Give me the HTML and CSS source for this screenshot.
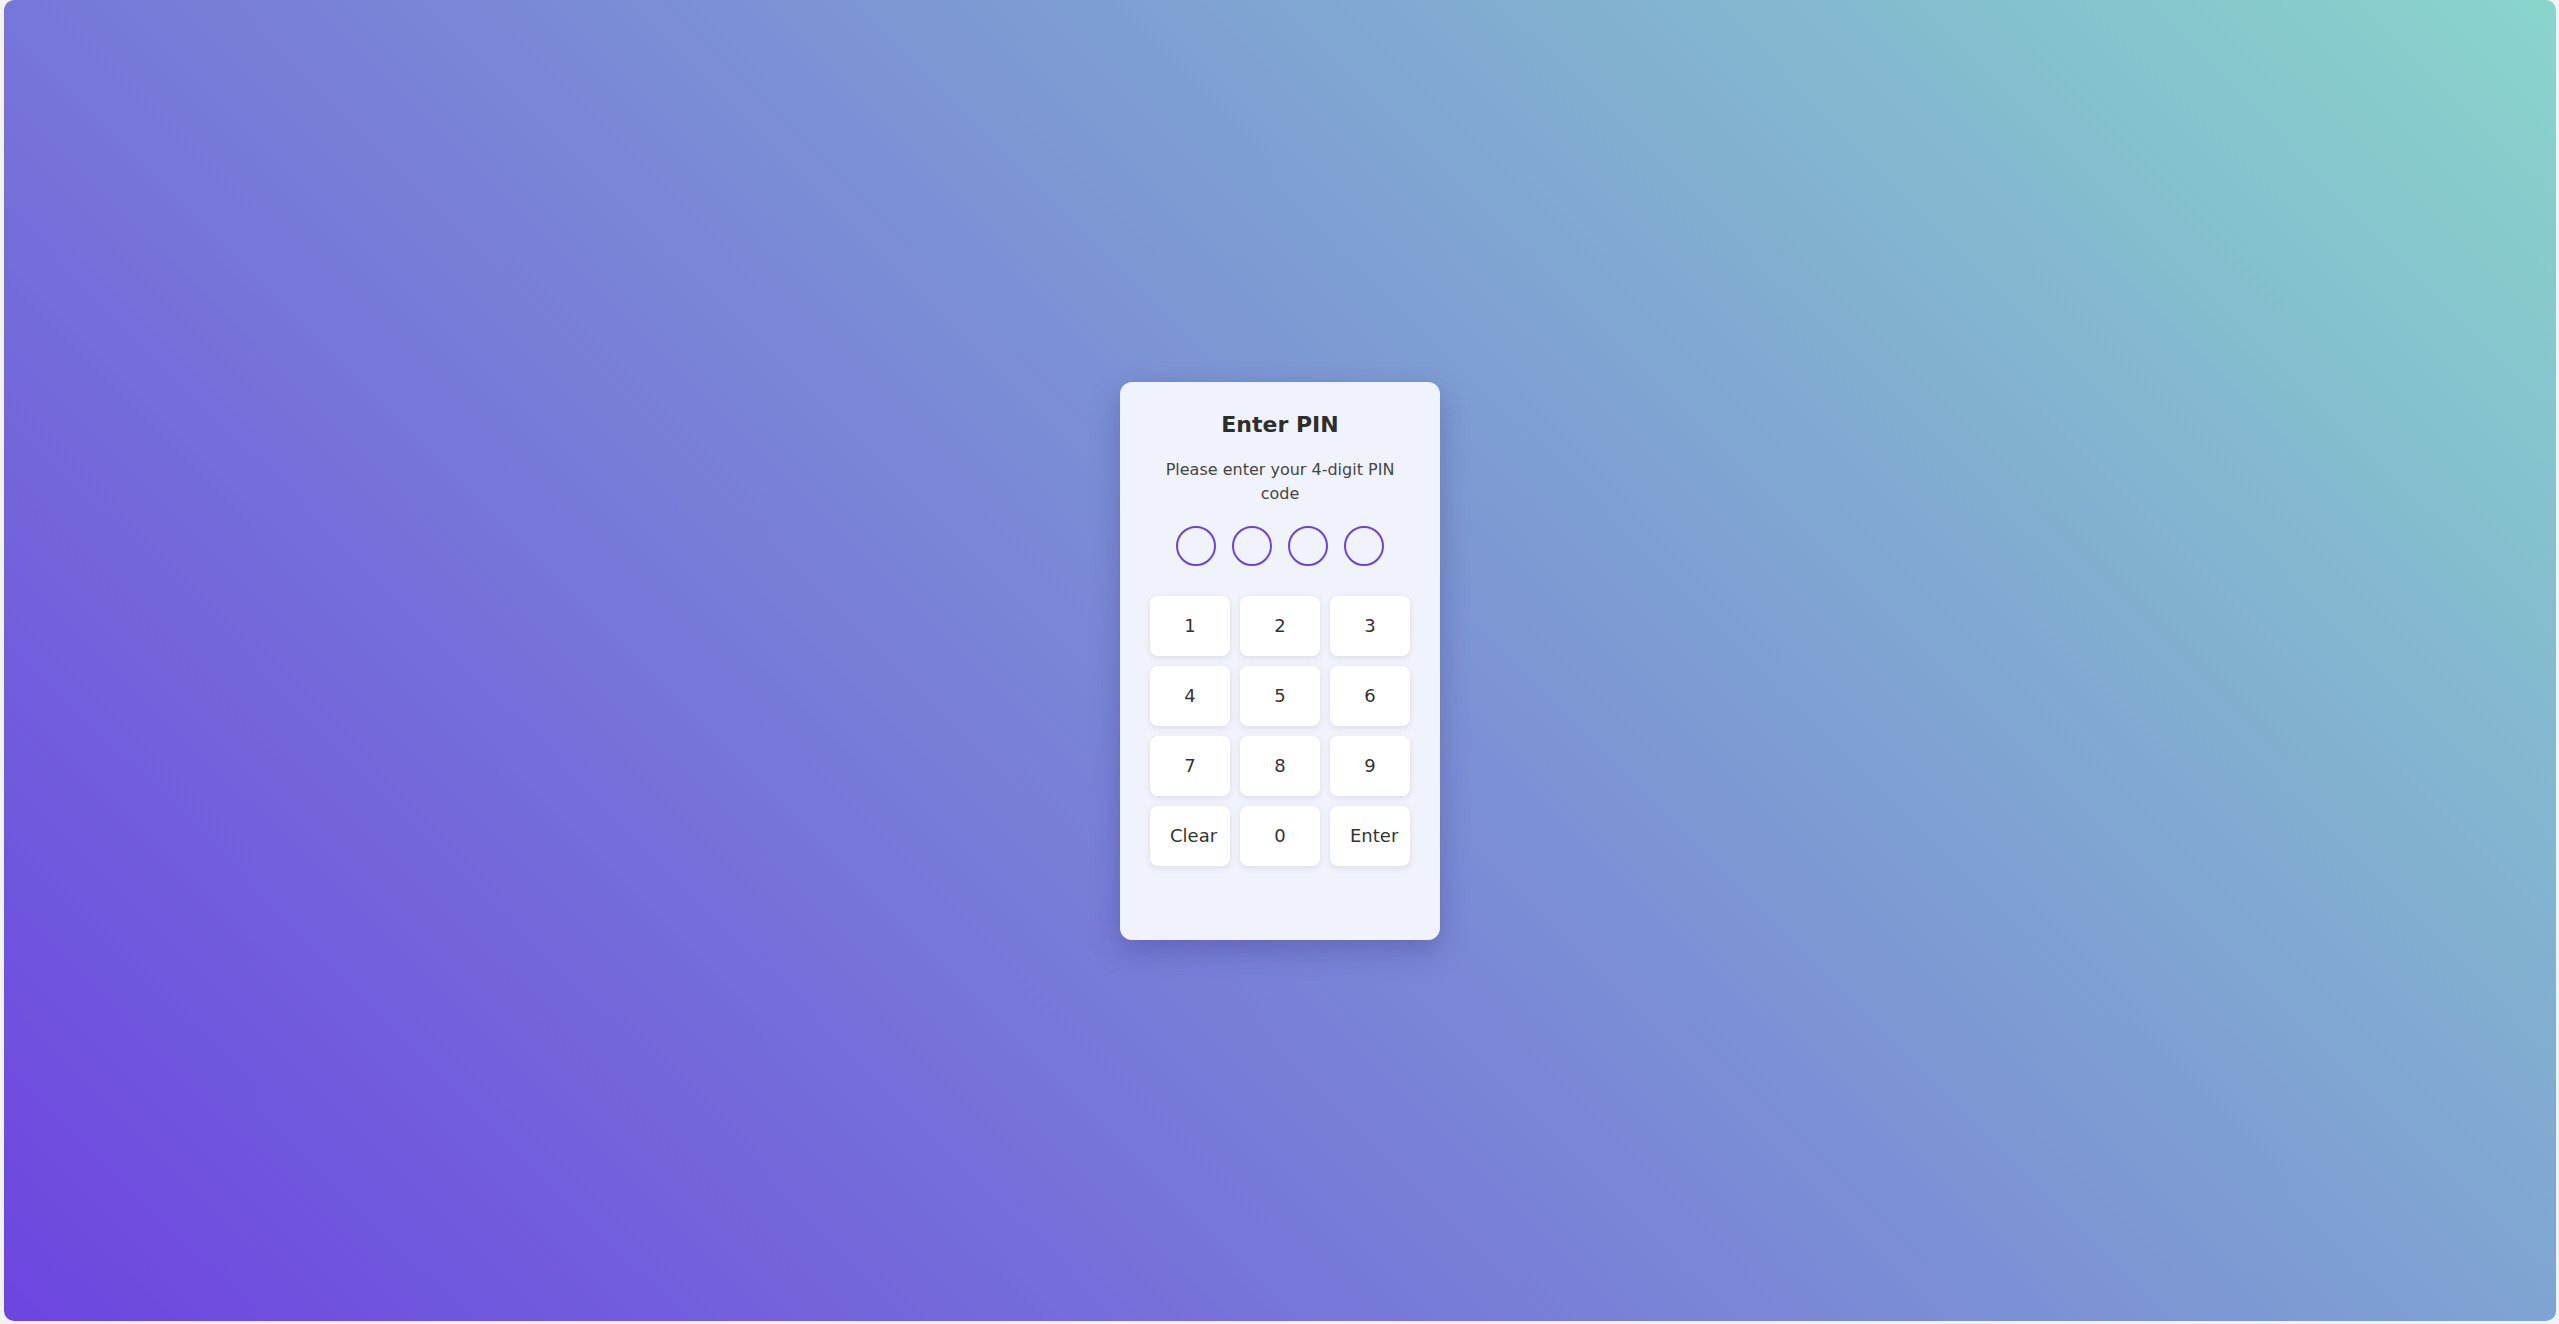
FILE: index.html
```html
<!DOCTYPE html>
<html lang="en">
<head>
<meta charset="utf-8">
<title>Enter PIN</title>
<link rel="stylesheet" href="styles.css">
</head>
<body>
<div class="screen">
  <div class="card">
    <h2 class="title">Enter PIN</h2>
    <p class="subtitle">Please enter your 4-digit PIN code</p>
    <div class="dots">
      <span class="dot"></span>
      <span class="dot"></span>
      <span class="dot"></span>
      <span class="dot"></span>
    </div>
    <div class="keypad">
      <button class="key">1</button>
      <button class="key">2</button>
      <button class="key">3</button>
      <button class="key">4</button>
      <button class="key">5</button>
      <button class="key">6</button>
      <button class="key">7</button>
      <button class="key">8</button>
      <button class="key">9</button>
      <button class="key">Clear</button>
      <button class="key">0</button>
      <button class="key">Enter</button>
    </div>
    <div class="message"></div>
  </div>
</div>
</body>
</html>
```
FILE: styles.css
```css
html, body {
  margin: 0;
  padding: 0;
  height: 100%;
}
body {
  background: #f3f3f5;
  font-family: "DejaVu Sans", "Liberation Sans", sans-serif;
  color: #333;
}
.screen {
  box-sizing: border-box;
  height: calc(100% - 3px);
  margin: 0 3px 0 4px;
  border-radius: 10px;
  background: linear-gradient(45deg, #6d45e0 0%, #89d5cb 100%);
  display: flex;
  align-items: center;
  justify-content: center;
}
.card {
  box-sizing: border-box;
  width: 320px;
  padding: 30px;
  background: #f0f3fb;
  border-radius: 12px;
  box-shadow: 0 10px 30px rgba(40, 30, 110, 0.28);
  text-align: center;
}
.title {
  margin: 0 0 20px;
  font-size: 22px;
  line-height: 26px;
  font-weight: bold;
  color: #2e2e2e;
}
.subtitle {
  margin: 0 0 20px;
  font-size: 16px;
  line-height: 24px;
  color: #454545;
}
.dots {
  display: flex;
  justify-content: center;
  gap: 16px;
  margin-bottom: 30px;
}
.dot {
  box-sizing: border-box;
  width: 40px;
  height: 40px;
  border: 2px solid #6c42de;
  border-radius: 50%;
}
.keypad {
  display: grid;
  grid-template-columns: repeat(3, 80px);
  grid-auto-rows: 60px;
  gap: 10px;
  justify-content: center;
}
.key {
  box-sizing: border-box;
  width: 80px;
  height: 60px;
  padding: 0 20px;
  border: none;
  border-radius: 8px;
  background: #ffffff;
  box-shadow: 0 2px 6px rgba(40, 40, 90, 0.10);
  font-family: "DejaVu Sans", "Liberation Sans", sans-serif;
  font-size: 18px;
  color: #333;
  text-align: center;
  white-space: nowrap;
  cursor: pointer;
}
.message {
  height: 24px;
  margin-top: 20px;
}
```
